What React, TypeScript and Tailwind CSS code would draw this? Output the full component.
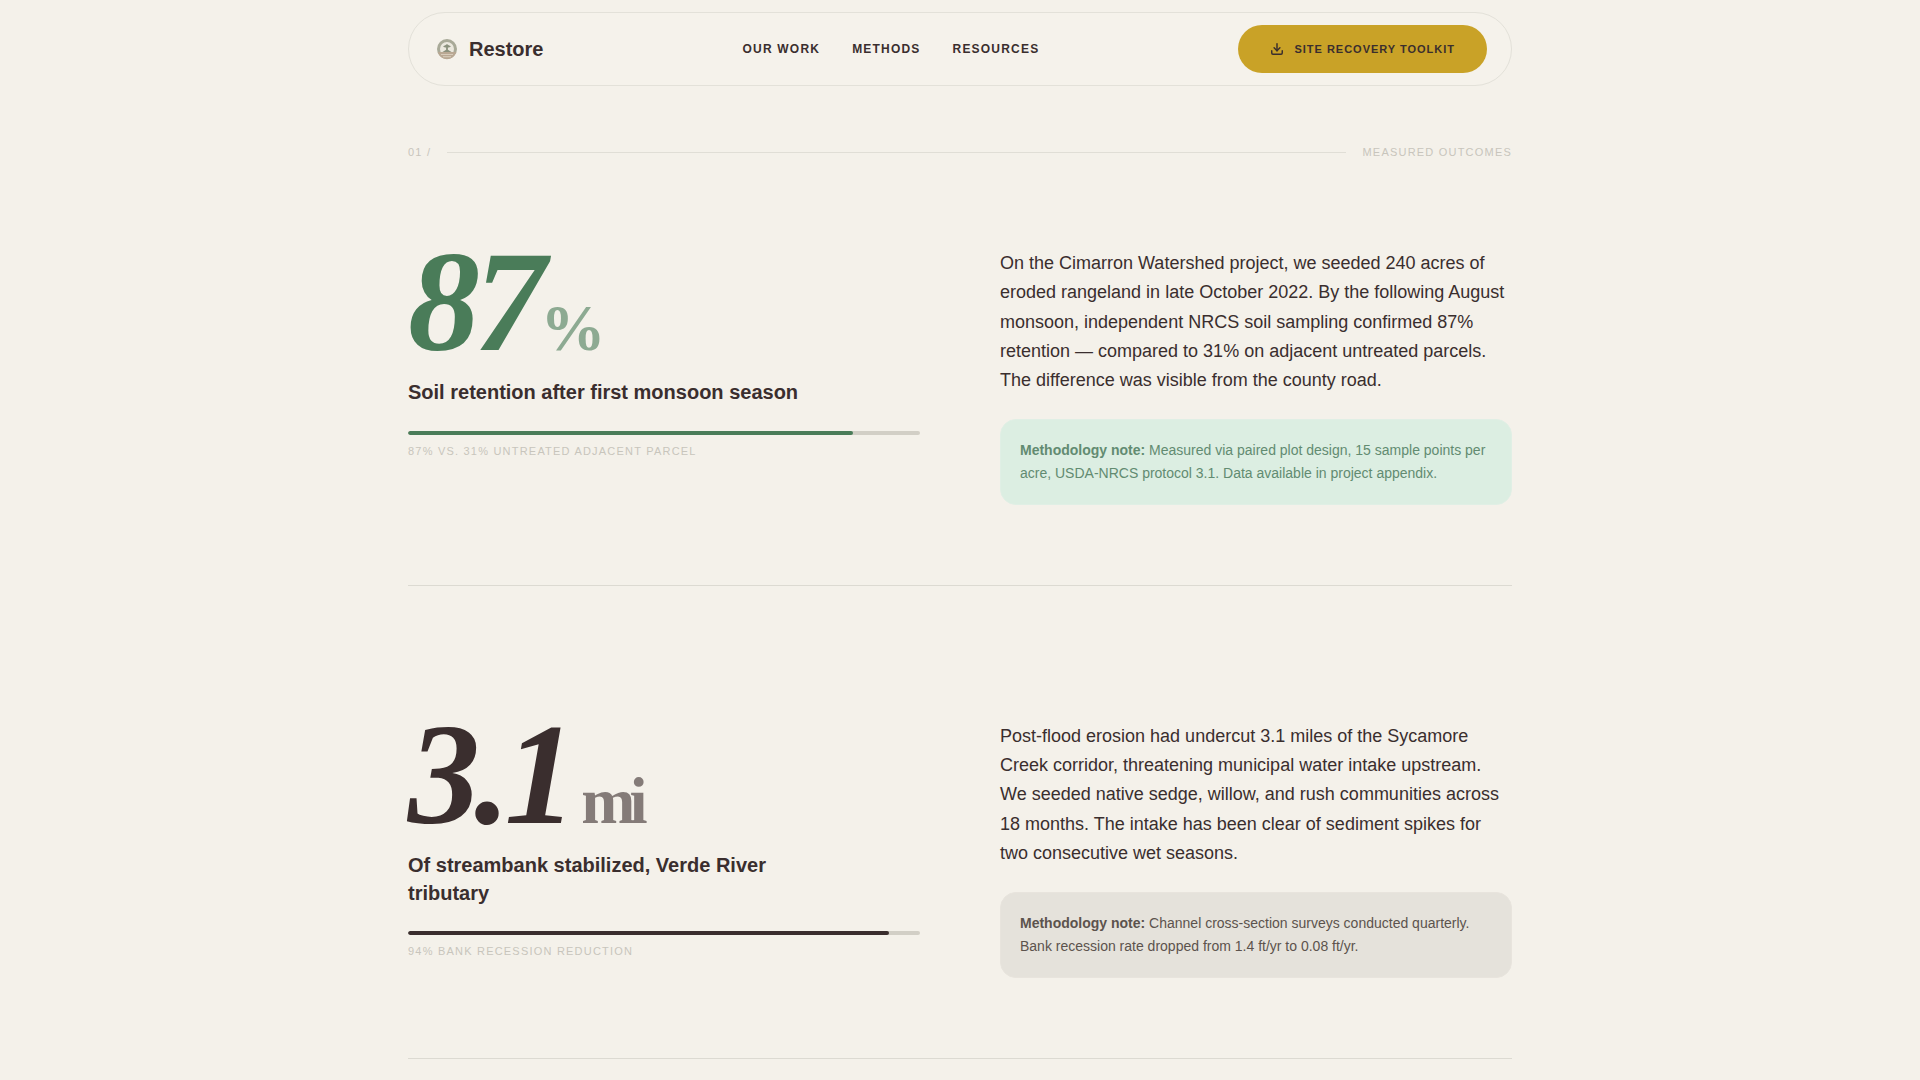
import { Download } from "lucide-react";

function Logo() {
  return (
    <svg viewBox="0 0 28 28" className="size-7" aria-hidden="true">
      <circle cx="14" cy="14" r="8.5" fill="#ebe8de" stroke="#a9aa98" strokeWidth="3" />
      <path d="M4.800 17h18.400a9.500 9.500 0 0 1-18.400 0Z" fill="#b9a893" />
      <path d="M8 19.500h12M10 21.700h8" stroke="#e0d5c5" strokeWidth="0.800" />
      <path
        d="M14 9c1.200 1 2.200 1.700 4 2.200-1 1-2.200 1.300-3.100 1.200v2.400l3.600 2.200h-9l3.600-2.200v-2.400c-.9.1-2.100-.2-3.100-1.200 1.800-.5 2.800-1.200 4-2.200Z"
        fill="#8b917d"
      />
    </svg>
  );
}

type Outcome = {
  value: string;
  unit: string;
  title: string;
  percent: number;
  caption: string;
  body: string;
  note: string;
  valueColor: string;
  barColor: string;
  noteColor: string;
};

const outcomes: Outcome[] = [
  {
    value: "87",
    unit: "%",
    title: "Soil retention after first monsoon season",
    percent: 87,
    caption: "87% vs. 31% untreated adjacent parcel",
    body: "On the Cimarron Watershed project, we seeded 240 acres of eroded rangeland in late October 2022. By the following August monsoon, independent NRCS soil sampling confirmed 87% retention — compared to 31% on adjacent untreated parcels. The difference was visible from the county road.",
    note: "Measured via paired plot design, 15 sample points per acre, USDA-NRCS protocol 3.1. Data available in project appendix.",
    valueColor: "text-[#4a7c59]",
    barColor: "bg-[#4a7c59]",
    noteColor: "bg-[#dceee2] border-[#e0efe5] text-[#628b71]",
  },
  {
    value: "3.1",
    unit: " mi",
    title: "Of streambank stabilized, Verde River tributary",
    percent: 94,
    caption: "94% bank recession reduction",
    body: "Post-flood erosion had undercut 3.1 miles of the Sycamore Creek corridor, threatening municipal water intake upstream. We seeded native sedge, willow, and rush communities across 18 months. The intake has been clear of sediment spikes for two consecutive wet seasons.",
    note: "Channel cross-section surveys conducted quarterly. Bank recession rate dropped from 1.4 ft/yr to 0.08 ft/yr.",
    valueColor: "text-[#3a2e2e]",
    barColor: "bg-[#3a2e2e]",
    noteColor: "bg-[#e5e2db] border-[#e8e4dd] text-[#5c534d]",
  },
];

function OutcomeRow({ item }: { item: Outcome }) {
  return (
    <article className="grid grid-cols-1 gap-20 border-b border-[#dcdad2] pb-20 lg:grid-cols-2">
      <div>
        <p
          className={`font-['Liberation_Serif',serif] text-[144px] leading-[0.85] font-bold tracking-[-0.04em] whitespace-pre italic ${item.valueColor}`}
        >
          {item.value}
          <span className="text-[65px] not-italic opacity-60">{item.unit}</span>
        </p>
        <h2 className="mt-4 max-w-[420px] text-xl leading-snug font-bold">{item.title}</h2>
        <div className="mt-6 h-1 overflow-hidden rounded-full bg-[#d2cfc6]">
          <div className={`h-full rounded-full ${item.barColor}`} style={{ width: `${item.percent}%` }} />
        </div>
        <p className="mt-2 text-[11px] leading-4 tracking-[0.11em] text-[#c8c5bc] uppercase">{item.caption}</p>
      </div>
      <div className="pt-2">
        <p className="text-lg leading-relaxed">{item.body}</p>
        <p className={`mt-6 rounded-2xl border px-[19px] py-[19px] text-sm leading-relaxed ${item.noteColor}`}>
          <strong className="font-bold">Methodology note:</strong> {item.note}
        </p>
      </div>
    </article>
  );
}

export default function App() {
  return (
    <div className="min-h-screen bg-[#f4f1ea] font-['Liberation_Sans',Arial,sans-serif] text-[#3a2e2e]">
      <div className="mx-auto max-w-[1200px] px-12 pt-3">
        <header className="flex items-center justify-between rounded-full border border-[#e3e1d9] bg-[#f5f2eb] px-6 py-3">
          <a href="#top" className="flex items-center gap-2 text-xl font-bold">
            <Logo />
            Restore
          </a>
          <nav className="flex items-center gap-8 text-xs font-bold tracking-[0.1em] uppercase">
            <a href="#work">Our Work</a>
            <a href="#methods">Methods</a>
            <a href="#resources">Resources</a>
          </nav>
          <button
            type="button"
            className="flex h-12 items-center gap-2.5 rounded-full bg-[#c9a227] px-8 text-[11px] font-bold tracking-[0.09em] uppercase"
          >
            <Download className="size-3.5" strokeWidth={2.5} aria-hidden="true" />
            Site Recovery Toolkit
          </button>
        </header>

        <main>
          <div className="mt-[58px] flex items-center gap-4 text-[11px] leading-4 tracking-[0.11em] text-[#c8c5bc] uppercase">
            <span>01 /</span>
            <span className="h-px flex-1 bg-[#e0ded6]" />
            <span>Measured Outcomes</span>
          </div>
          <div className="mt-[81px] space-y-32">
            {outcomes.map((item) => (
              <OutcomeRow key={item.value} item={item} />
            ))}
          </div>
        </main>
      </div>
    </div>
  );
}
